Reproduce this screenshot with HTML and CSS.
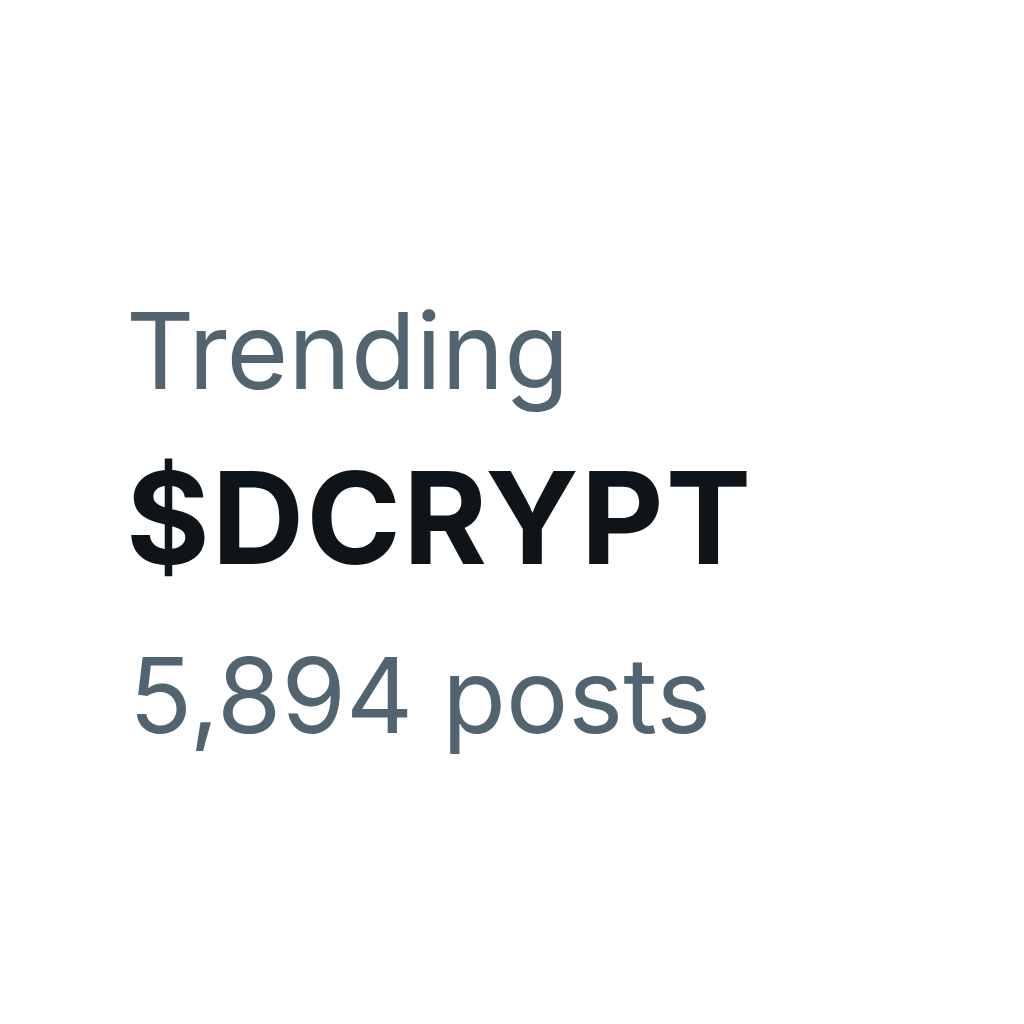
FILE: index.html
```html
<!DOCTYPE html>
<html lang="en">
<head>
  <meta charset="UTF-8">
  <meta name="viewport" content="width=device-width, initial-scale=1.0">
  <title>Trending</title>
  <link rel="stylesheet" href="styles.css">
</head>
<body>
  <div class="trend-card">
    <div class="trend-label">Trending</div>
    <div class="trend-name">$DCRYPT</div>
    <div class="trend-count">5,894 posts</div>
  </div>
</body>
</html>
```

FILE: styles.css
```css
body {
  margin: 0;
  background-color: #ffffff;
  font-family: Inter, "Noto Sans", sans-serif;
}

.trend-card {
  display: flex;
  flex-direction: column;
  padding: 287px 0 0 126px;
}

.trend-label {
  font-size: 106px;
  line-height: 128px;
  color: #536471;
}

.trend-name {
  font-size: 128px;
  line-height: 206px;
  font-weight: 700;
  letter-spacing: 2px;
  color: #0f1419;
}

.trend-count {
  font-size: 104px;
  line-height: 148px;
  color: #536471;
  padding-left: 3px;
}
```
